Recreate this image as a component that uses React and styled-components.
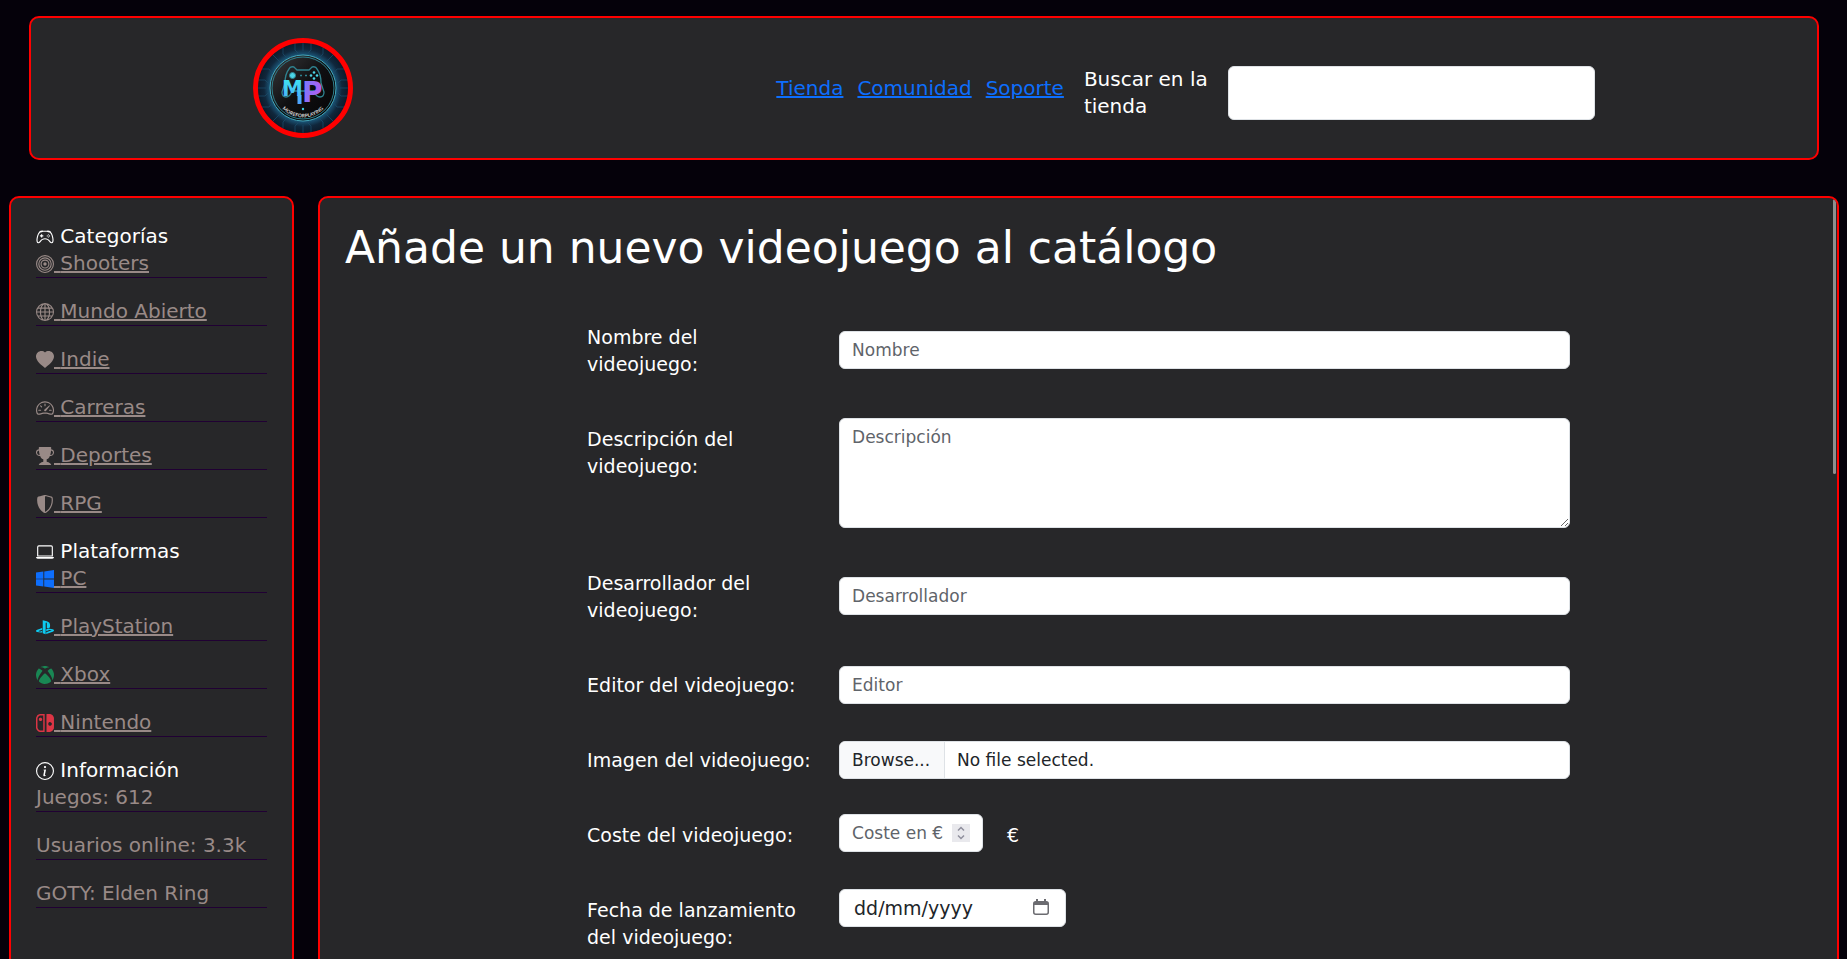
import React from "react";
import styled, { createGlobalStyle, css } from "styled-components";
import {
  BsController, BsBullseye, BsGlobe, BsHeartFill, BsSpeedometer2, BsTrophyFill,
  BsShieldShaded, BsLaptop, BsWindows, BsPlaystation, BsXbox, BsNintendoSwitch, BsInfoCircle,
} from "react-icons/bs";

const colors = {
  page: "#05010a",
  panel: "#272729",
  accent: "#ff0000",
  link: "#0d6efd",
  muted: "#998a87",
  rule: "#200033",
  field: "#dee2e6",
  ink: "#212529",
  hint: "#5f646a",
};

const GlobalStyle = createGlobalStyle`
  *, *::before, *::after { box-sizing: border-box; }
  body {
    margin: 0;
    background: ${colors.page};
    color: #fff;
    font: 19px/27px "DejaVu Sans", sans-serif;
  }
  input, textarea, button { font-family: inherit; }
`;

const Page = styled.div`
  height: 100vh;
  overflow: hidden;
  display: flex;
  flex-direction: column;
`;

const panel = css`
  background: ${colors.panel};
  border: 2px solid ${colors.accent};
  border-radius: 10px;
`;

const Header = styled.header`
  ${panel}
  flex: none;
  display: flex;
  align-items: center;
  justify-content: space-between;
  margin: 16px 28px 36px 29px;
  padding: 20px 12%;
  font-size: 20px;
`;

const LogoLink = styled.a`
  display: block;
  width: 100px;
  height: 100px;
  flex: none;
  svg { display: block; }
`;

const Tools = styled.div`
  display: flex;
  align-items: center;
  flex: 0 0 61%;
`;

const Nav = styled.nav`
  display: flex;
  gap: 14px;
  margin-right: 20px;
  a { color: ${colors.link}; }
`;

const Search = styled.form`
  flex: 1;
  display: flex;
  align-items: stretch;
  padding-top: 10px;
  label { width: 144px; }
`;

const fieldBox = css`
  background: #fff;
  border: 1px solid ${colors.field};
  border-radius: 6px;
  color: ${colors.ink};
`;

const SearchInput = styled.input`
  ${fieldBox}
  flex: 1;
  min-width: 0;
  padding: 6px 12px;
  font-size: 19px;
`;

const Columns = styled.div`
  flex: none;
  height: 100vh;
  display: flex;
  gap: 24px;
  padding: 0 8px 0 9px;
`;

const Sidebar = styled.aside`
  ${panel}
  flex: 0 0 285px;
  padding: 25px;
  font-size: 20px;
  svg { width: 18px; height: 18px; vertical-align: -3px; }
`;

const GroupTitle = styled.div`
  line-height: 27px;
`;

const List = styled.ul`
  list-style: none;
  margin: 0;
  padding: 0;
`;

const Item = styled.li`
  margin-bottom: 20px;
  border-bottom: 1px solid ${colors.rule};
  color: ${colors.muted};
  a { color: inherit; }
  svg { color: ${(p) => p.$tint || "inherit"}; }
`;

const Main = styled.main`
  ${panel}
  position: relative;
  flex: 1;
  min-width: 0;
  padding: 25px;
  overflow: hidden;
`;

const ScrollThumb = styled.div`
  position: absolute;
  top: 1px;
  right: 1px;
  width: 3px;
  height: 275px;
  border-radius: 2px;
  background: #8f8f8f;
`;

const Title = styled.h1`
  margin: 0 0 43px;
  font-size: 44px;
  line-height: 50px;
  font-weight: 400;
`;

const Form = styled.form`
  width: 67%;
  margin: 0 auto;
  display: grid;
  gap: 34px;
`;

const Row = styled.div`
  display: grid;
  grid-template-columns: 226px 1fr;
  column-gap: 26px;
  align-items: ${(p) => (p.$top ? "start" : "center")};
`;

const RowLabel = styled.label`
  padding: 8px 0 6px;
`;

const Input = styled.input`
  ${fieldBox}
  display: block;
  width: 100%;
  height: 38px;
  padding: 6px 12px;
  font-size: 17px;
  &::placeholder { color: ${colors.hint}; opacity: 1; }
`;

const TextArea = styled.textarea`
  ${fieldBox}
  display: block;
  width: 100%;
  height: 110px;
  padding: 6px 12px;
  font-size: 17px;
  line-height: 24px;
  resize: vertical;
  &::placeholder { color: ${colors.hint}; opacity: 1; }
`;

const FileField = styled.div`
  ${fieldBox}
  position: relative;
  display: flex;
  height: 38px;
  overflow: hidden;
  font-size: 17px;
  line-height: 36px;
  input {
    position: absolute;
    inset: 0;
    width: 100%;
    opacity: 0;
  }
`;

const FileButton = styled.span`
  width: 105px;
  padding-left: 12px;
  background: #f8f9fa;
  border-right: 1px solid ${colors.field};
`;

const FileName = styled.span`
  padding-left: 12px;
`;

const Inline = styled.div`
  display: flex;
  gap: 24px;
`;

const Unit = styled.span`
  padding-top: 8px;
`;

const CostField = styled.div`
  position: relative;
  width: 144px;
  input { appearance: textfield; padding-right: 30px; }
  input::-webkit-inner-spin-button { display: none; }
`;

const Spinner = styled.button`
  position: absolute;
  top: 10px;
  right: 13px;
  width: 18px;
  height: 18px;
  padding: 0;
  border: 0;
  background: #e9e9ed;
  svg { display: block; }
`;

const DateField = styled.div`
  position: relative;
  width: 227px;
  input { padding-left: 14px; font-size: 19px; }
  input::placeholder { color: ${colors.ink}; }
`;

const DateButton = styled.button`
  position: absolute;
  top: 10px;
  right: 16px;
  width: 18px;
  height: 18px;
  padding: 0;
  border: 0;
  background: none;
  svg { display: block; }
`;

const Logo = () => (
  <svg width="100" height="100" viewBox="0 0 100 100" role="img" aria-label="MoreForPlaying">
    <defs>
      <radialGradient id="glow">
        <stop offset="0.68" stopColor="#1c5c80" />
        <stop offset="0.82" stopColor="#10273c" />
        <stop offset="1" stopColor="#0b1624" />
      </radialGradient>
      <linearGradient id="disc" x1="0" y1="0" x2="1" y2="1">
        <stop offset="0" stopColor="#3a3a3c" />
        <stop offset="0.5" stopColor="#0f0f11" />
        <stop offset="1" stopColor="#050506" />
      </linearGradient>
      <linearGradient id="em" gradientUnits="userSpaceOnUse" x1="0" y1="42" x2="0" y2="67">
        <stop offset="0" stopColor="#3fe0f0" />
        <stop offset="1" stopColor="#4f9dff" />
      </linearGradient>
      <linearGradient id="pe" x1="0" y1="0" x2="1" y2="0.4">
        <stop offset="0" stopColor="#6f7dff" />
        <stop offset="1" stopColor="#b45cf0" />
      </linearGradient>
      <path id="arc" d="M22 58 A 29 29 0 0 0 78 58" />
    </defs>
    <circle cx="50" cy="50" r="47.500" fill="url(#glow)" />
    <g fill="none" stroke="#1b4a68" strokeWidth="0.800">
      <path d="M50 4v9M42 5v7l3 3M58 5v7l-3 3M30 10v6l5 5M70 10v6l-5 5M20 17l9 9M80 17l-9 9" />
      <path d="M50 96v-9M42 95v-7l3-3M58 95v-7l-3-3M30 90v-6l5-5M70 90v-6l-5-5M20 83l9-9M80 83l-9-9" />
      <path d="M4 50h9M5 42h7l3 3M5 58h7l3-3M9 31h7l4 5M9 69h7l4-5" />
      <path d="M96 50h-9M95 42h-7l-3 3M95 58h-7l-3-3M91 31h-7l-4 5M91 69h-7l-4-5" />
    </g>
    <circle cx="50" cy="50" r="33" fill="url(#disc)" stroke="#43a6b8" strokeWidth="1" />
    <circle cx="50" cy="50" r="31" fill="none" stroke="#2e7f8c" strokeWidth="1" />
    <g fill="none" stroke="#2f8390" strokeWidth="1.300">
      <path d="M36 31q1-3 5-2l3 3h12l3-3q4-1 5 2q4 5 4 14l3 9q0 5-4 5q-4 0-6-6H39q-2 6-6 6q-4 0-4-5l3-9q0-9 4-14z" />
      <path d="M47 37.500h2M52 37.500h2" />
    </g>
    <circle cx="39.500" cy="37.500" r="3" fill="#4bd5e6" stroke="#2f8390" strokeWidth="1" />
    <g fill="#4bd5e6">
      <circle cx="61" cy="34.500" r="1.300" />
      <circle cx="61" cy="40.500" r="1.300" />
      <circle cx="58" cy="37.500" r="1.300" />
      <circle cx="64" cy="37.500" r="1.300" />
    </g>
    <text x="29" y="58" fontSize="21" fontWeight="700" fontFamily="DejaVu Sans" fill="url(#em)">M</text>
    <rect x="44.500" y="57" width="4" height="9" fill="url(#em)" />
    <text x="49" y="64" fontSize="28" fontWeight="700" fontFamily="DejaVu Sans" fill="url(#pe)">P</text>
    <circle cx="50" cy="71" r="1.200" fill="#3fc9e0" />
    <text fontSize="5" fontWeight="700" fontFamily="Lato" fill="#d8d8d8">
      <textPath href="#arc" startOffset="50%" textAnchor="middle">MOREFORPLAYING</textPath>
    </text>
    <circle cx="50" cy="50" r="47.500" fill="none" stroke="#ff0000" strokeWidth="5" />
  </svg>
);

const categories = [
  { icon: BsBullseye, name: "Shooters" },
  { icon: BsGlobe, name: "Mundo Abierto" },
  { icon: BsHeartFill, name: "Indie" },
  { icon: BsSpeedometer2, name: "Carreras" },
  { icon: BsTrophyFill, name: "Deportes" },
  { icon: BsShieldShaded, name: "RPG" },
];

const platforms = [
  { icon: BsWindows, name: "PC", tint: "#0d6efd" },
  { icon: BsPlaystation, name: "PlayStation", tint: "#0dcaf0" },
  { icon: BsXbox, name: "Xbox", tint: "#198754" },
  { icon: BsNintendoSwitch, name: "Nintendo", tint: "#dc3545" },
];

const facts = ["Juegos: 612", "Usuarios online: 3.3k", "GOTY: Elden Ring"];

const LinkList = ({ items }) => (
  <List>
    {items.map(({ icon: Icon, name, tint }) => (
      <Item key={name} $tint={tint}>
        <a href="#"><Icon /> {name}</a>
      </Item>
    ))}
  </List>
);

export default function App() {
  return (
    <Page>
      <GlobalStyle />
      <Header>
        <LogoLink href="#"><Logo /></LogoLink>
        <Tools>
          <Nav>
            <a href="#">Tienda</a>
            <a href="#">Comunidad</a>
            <a href="#">Soporte</a>
          </Nav>
          <Search>
            <label htmlFor="search">Buscar en la tienda</label>
            <SearchInput id="search" type="text" />
          </Search>
        </Tools>
      </Header>
      <Columns>
        <Sidebar>
          <GroupTitle><BsController /> Categorías</GroupTitle>
          <LinkList items={categories} />
          <GroupTitle><BsLaptop /> Plataformas</GroupTitle>
          <LinkList items={platforms} />
          <GroupTitle><BsInfoCircle /> Información</GroupTitle>
          <List>
            {facts.map((fact) => <Item key={fact}>{fact}</Item>)}
          </List>
        </Sidebar>
        <Main>
          <Title>Añade un nuevo videojuego al catálogo</Title>
          <Form>
            <Row>
              <RowLabel htmlFor="name">Nombre del videojuego:</RowLabel>
              <Input id="name" type="text" placeholder="Nombre" />
            </Row>
            <Row $top>
              <RowLabel htmlFor="description">Descripción del videojuego:</RowLabel>
              <TextArea id="description" placeholder="Descripción" />
            </Row>
            <Row>
              <RowLabel htmlFor="developer">Desarrollador del videojuego:</RowLabel>
              <Input id="developer" type="text" placeholder="Desarrollador" />
            </Row>
            <Row>
              <RowLabel htmlFor="publisher">Editor del videojuego:</RowLabel>
              <Input id="publisher" type="text" placeholder="Editor" />
            </Row>
            <Row>
              <RowLabel htmlFor="image">Imagen del videojuego:</RowLabel>
              <FileField>
                <FileButton>Browse...</FileButton>
                <FileName>No file selected.</FileName>
                <input id="image" type="file" />
              </FileField>
            </Row>
            <Row $top>
              <RowLabel htmlFor="cost">Coste del videojuego:</RowLabel>
              <Inline>
                <CostField>
                  <Input id="cost" type="number" placeholder="Coste en €" />
                  <Spinner type="button" aria-label="Cambiar coste">
                    <svg width="18" height="18" fill="none" stroke="#8f8f9d" strokeWidth="1.500">
                      <path d="M6 6.500l3-3l3 3M6 11.500l3 3l3-3" />
                    </svg>
                  </Spinner>
                </CostField>
                <Unit>€</Unit>
              </Inline>
            </Row>
            <Row $top>
              <RowLabel htmlFor="release">Fecha de lanzamiento del videojuego:</RowLabel>
              <DateField>
                <Input id="release" type="text" placeholder="dd/mm/yyyy" />
                <DateButton type="button" aria-label="Abrir calendario">
                  <svg width="18" height="18" fill="none" stroke="#6b6b70" strokeWidth="1.500">
                    <rect x="1.750" y="2.750" width="14.500" height="12.500" rx="2" />
                    <path d="M2 4.500h14" strokeWidth="3" />
                    <path d="M5 0v3M13 0v3" strokeWidth="2" />
                  </svg>
                </DateButton>
              </DateField>
            </Row>
          </Form>
          <ScrollThumb />
        </Main>
      </Columns>
    </Page>
  );
}
